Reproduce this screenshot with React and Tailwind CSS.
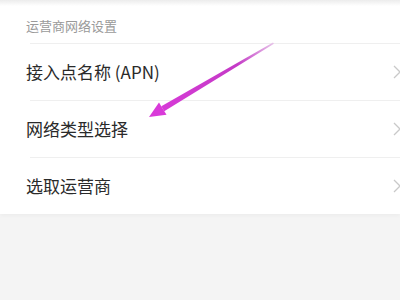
import React from "react";

const rows = ["接入点名称 (APN)", "网络类型选择", "选取运营商"];

function Chevron() {
  return (
    <svg width="8" height="14" viewBox="0 0 8 14" className="shrink-0">
      <path d="M1 1 L7 7 L1 13" fill="none" stroke="#c9c9c9" strokeWidth="1.3" />
    </svg>
  );
}

export default function App() {
  return (
    <div
      className="relative w-[400px] h-[300px] overflow-hidden bg-[#f4f4f4]"
      style={{ fontFamily: '"Noto Sans CJK SC", "Liberation Sans", sans-serif' }}
    >
      <div className="h-[6px] bg-gradient-to-b from-[#ececec] to-white" />
      <div className="bg-white shadow-[0_2px_4px_rgba(0,0,0,0.03)]">
        <div className="h-[37px] flex items-center pl-[26px] text-[13px] text-[#9a9a9a] pt-[3px]">
          运营商网络设置
        </div>
        {rows.map((label) => (
          <div key={label} className="ml-[30px] border-t border-[#efefef] h-[57px] flex items-center justify-between -mr-[1px]">
            <span className="-ml-[4px] text-[17px] text-[#2a2a2a]">{label}</span>
            <Chevron />
          </div>
        ))}
      </div>

      <svg className="absolute left-0 top-0 pointer-events-none" width="400" height="300">
        <defs>
          <linearGradient id="shaft" x1="150" y1="116" x2="275" y2="43" gradientUnits="userSpaceOnUse">
            <stop offset="0" stopColor="#d93ad9" />
            <stop offset="0.7" stopColor="#c43ac6" />
            <stop offset="1" stopColor="#e8c8ea" />
          </linearGradient>
        </defs>
        <polygon points="161.3,106.3 164.2,111.3 274,43.8 273,42.6" fill="url(#shaft)" />
        <polygon points="149,117 159,102.6 166.5,114.8" fill="#d93ad9" />
      </svg>
    </div>
  );
}
